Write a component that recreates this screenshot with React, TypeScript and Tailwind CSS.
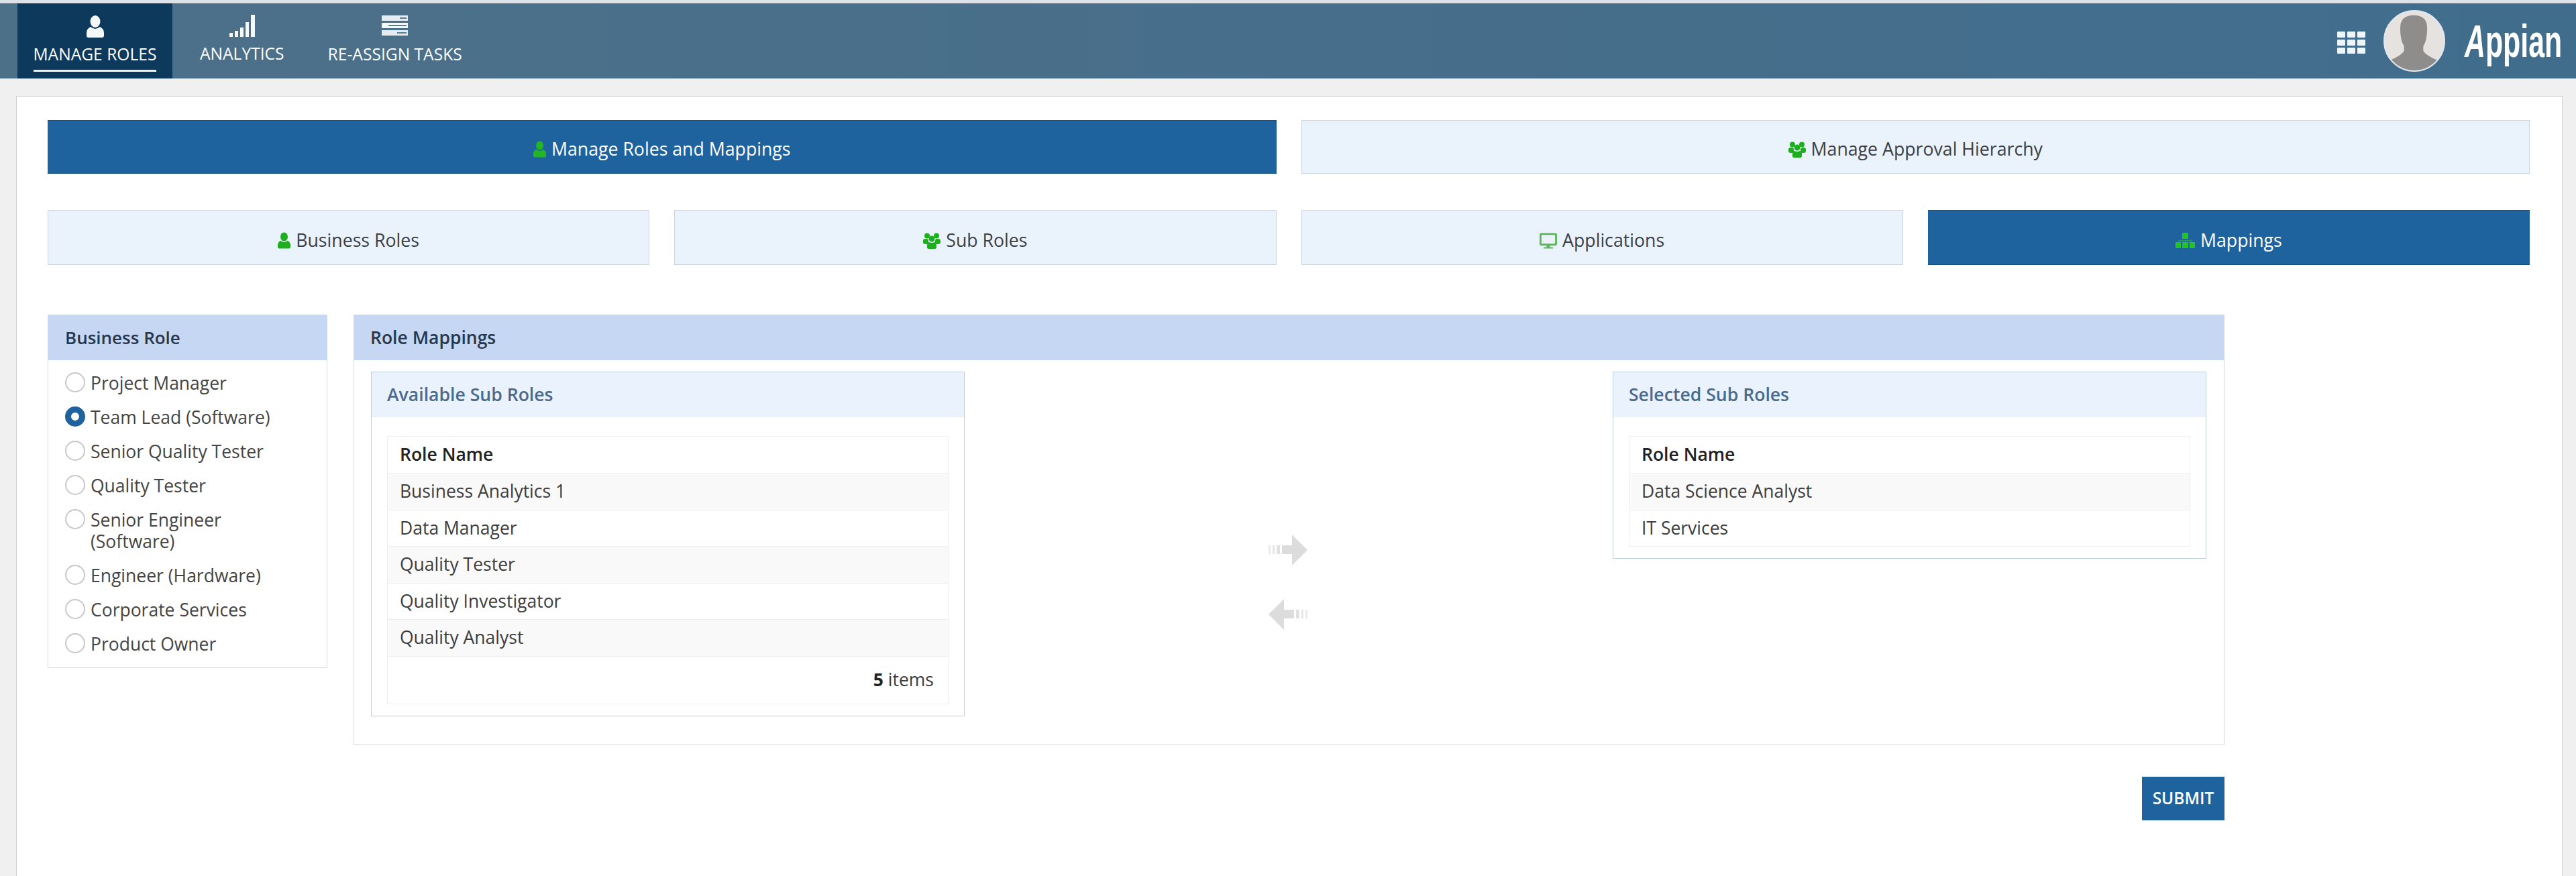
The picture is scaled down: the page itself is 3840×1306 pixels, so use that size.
import { FaDesktop } from "react-icons/fa";

function UserIcon({ className }: { className?: string }) {
  return (
    <svg viewBox="0 0 26 33" className={className} fill="currentColor">
      <ellipse cx="13" cy="9" rx="7.5" ry="9" />
      <path d="M6 17 Q13 23 20 17 Q26 20 26 26 L26 30 Q26 33 23 33 L3 33 Q0 33 0 30 L0 26 Q0 20 6 17Z" />
    </svg>
  );
}

function UsersIcon({ className }: { className?: string }) {
  return (
    <svg viewBox="0 0 26 24" className={className} fill="currentColor">
      <circle cx="6" cy="4.5" r="4" />
      <circle cx="20" cy="4.5" r="4" />
      <rect x="0" y="9" width="8" height="8" rx="3" />
      <rect x="18" y="9" width="8" height="8" rx="3" />
      <circle cx="13" cy="9" r="4.5" />
      <path d="M6 18 Q6 14 9 14 Q13 16 17 14 Q20 14 20 18 L20 22 Q20 24 18 24 L8 24 Q6 24 6 22Z" />
    </svg>
  );
}

function SitemapIcon({ className }: { className?: string }) {
  return (
    <svg viewBox="0 0 29 23" className={className} fill="currentColor">
      <rect x="10" y="0" width="9" height="9" />
      <rect x="4" y="11" width="21" height="2" opacity="0.6" />
      <rect x="0" y="14" width="8" height="9" />
      <rect x="10" y="14" width="9" height="9" />
      <rect x="21" y="14" width="8" height="9" />
    </svg>
  );
}

function SignalIcon() {
  return (
    <svg viewBox="0 0 38 33" className="w-[38px] h-[33px]" fill="#f4f8fa">
      <rect x="0" y="27" width="5" height="6" />
      <rect x="8" y="24" width="5" height="9" />
      <rect x="16" y="19" width="5" height="14" />
      <rect x="24" y="11" width="5" height="22" />
      <rect x="32" y="0" width="6" height="33" />
    </svg>
  );
}

function ServerIcon() {
  return (
    <svg viewBox="0 0 39 30" className="w-[39px] h-[30px]">
      <rect y="0" width="39" height="8" fill="#e6edf2" />
      <rect x="27" y="3" width="10" height="2" fill="#5a7c94" />
      <rect y="11" width="39" height="8" fill="#f4f8fa" />
      <rect x="10" y="14" width="27" height="2" fill="#5a7c94" />
      <rect y="22" width="39" height="8" fill="#e6edf2" />
      <rect x="23" y="25" width="14" height="2" fill="#5a7c94" />
    </svg>
  );
}

function GridIcon() {
  return (
    <div className="grid grid-cols-3 gap-[3px] w-[42px] mt-[4px]">
      {[0, 1, 2, 3, 4, 5, 6, 7, 8].map((i) => (
        <span key={i} className="h-[9px] bg-[#eef6fb] rounded-[1px]" />
      ))}
    </div>
  );
}

function Avatar() {
  return (
    <div className="w-[92px] h-[92px] rounded-full border-2 border-[#dfe7ee] bg-[#e6e2df] overflow-hidden">
      <svg viewBox="0 0 92 92" className="w-full h-full">
        <path
          d="M24 26 Q24 6 45 6 Q66 6 66 26 Q66 46 60 54 L60 62 Q66 70 82 76 L82 92 L8 92 L8 76 Q24 70 30 62 L30 54 Q24 46 24 26Z"
          fill="#8f8d8c"
        />
      </svg>
    </div>
  );
}

function ArrowIcon({ flip }: { flip?: boolean }) {
  return (
    <svg viewBox="0 0 58 46" className={flip ? "w-[58px] h-[46px] -scale-x-100" : "w-[58px] h-[46px]"} fill="#dcdcdc">
      <rect x="0" y="16" width="3" height="13" opacity="0.6" />
      <rect x="6" y="16" width="3" height="13" opacity="0.7" />
      <rect x="12" y="16" width="5" height="13" opacity="0.85" />
      <rect x="20" y="16" width="16" height="13" />
      <path d="M35 0 L58 23 L35 46Z" />
    </svg>
  );
}

function TopButton({ label, active, tall, icon }: { label: string; active?: boolean; tall?: boolean; icon: React.ReactNode }) {
  return (
    <div
      className={
        (tall ? "h-[82px] pt-[9px] " : "h-[80px] pt-[7px] ") +
        (active
          ? "flex items-center justify-center gap-[8px] bg-[#1f639e] text-white text-[26.7px] border-y border-[#16507f]"
          : "flex items-center justify-center gap-[8px] bg-[#eaf2fc] text-[#3a3f45] text-[26.7px] border border-[#ccd4de]")
      }
    >
      {icon}
      <span>{label}</span>
    </div>
  );
}

function RoleTable({ rows, footer }: { rows: string[]; footer?: boolean }) {
  return (
    <div className="border border-[#eeeeee] text-[26.5px] text-[#3d3d3d]">
      <div className="h-[54px] flex items-center pl-[18px] font-semibold text-[#222]">Role Name</div>
      {rows.map((r, i) => (
        <div
          key={r}
          className={
            i % 2 === 0
              ? "h-[54.6px] flex items-center pl-[18px] border-t border-[#eeeeee] bg-[#f9f9f9]"
              : "h-[54.6px] flex items-center pl-[18px] border-t border-[#eeeeee]"
          }
        >
          {r}
        </div>
      ))}
      {footer && (
        <div className="h-[71px] flex items-center justify-end pr-[21px] border-t border-[#eeeeee]">
          <b className="font-bold text-[#222] mr-[7px]">5</b> items
        </div>
      )}
    </div>
  );
}

function SubPanel({ title, children }: { title: string; children: React.ReactNode }) {
  return (
    <div className="w-[885px] border border-[#c0cfdc] pb-[17px]">
      <div className="h-[67px] flex items-center pl-[23px] bg-[#e9f2fd] text-[26.6px] font-semibold text-[#4a6a8e]">{title}</div>
      <div className="mt-[28px] mx-[23px]">{children}</div>
    </div>
  );
}

const roles = [
  "Project Manager",
  "Team Lead (Software)",
  "Senior Quality Tester",
  "Quality Tester",
  "Senior Engineer (Software)",
  "Engineer (Hardware)",
  "Corporate Services",
  "Product Owner",
];

export default function App() {
  return (
    <div className="w-[3840px] h-[1306px] overflow-hidden bg-[#f1f0f1] font-['Open_Sans',sans-serif]">
      <div className="h-[5px] bg-[#dde1e8]" />

      {/* top nav */}
      <header className="h-[112px] flex items-stretch pl-[26px] pr-[21px] bg-linear-to-r from-[#4d7089] to-[#416d8d] text-white text-[24.6px]">
        <div className="w-[231px] bg-[#0d3a5c] flex flex-col items-center pt-[18px]">
          <UserIcon className="w-[26px] h-[33px] text-[#f4f8fa]" />
          <span className="mt-[8px] leading-[34px] border-b-[3px] border-[#e6f3f8] pb-[6px]">MANAGE ROLES</span>
        </div>
        <div className="ml-[41px] flex flex-col items-center pt-[17px]">
          <SignalIcon />
          <span className="mt-[8px] leading-[34px]">ANALYTICS</span>
        </div>
        <div className="ml-[65px] flex flex-col items-center pt-[18px]">
          <ServerIcon />
          <span className="mt-[11px] leading-[34px]">RE-ASSIGN TASKS</span>
        </div>
        <div className="ml-auto flex items-center">
          <GridIcon />
          <div className="ml-[27px]">
            <Avatar />
          </div>
          <div className="ml-[29px] w-[145px] h-[90px] font-['Liberation_Sans',sans-serif] font-bold text-[68px] leading-[90px]">
            <div className="origin-left scale-x-[0.63] whitespace-nowrap">
              <span className="italic">A</span>ppian
            </div>
          </div>
        </div>
      </header>

      {/* content card */}
      <main className="mt-[26px] mx-[24px] w-[3796px] h-[1200px] bg-white border border-[#cfcfcf] pt-[35px] px-[46px]">
        <div className="grid grid-cols-2 gap-[37px] w-[3700px]">
          <TopButton active label="Manage Roles and Mappings" icon={<UserIcon className="w-[19px] h-[25px] text-[#22b722]" />} />
          <TopButton label="Manage Approval Hierarchy" icon={<UsersIcon className="w-[26px] h-[24px] text-[#1fae1f]" />} />
        </div>
        <div className="grid grid-cols-4 gap-[37px] mt-[54px] w-[3700px]">
          <TopButton tall label="Business Roles" icon={<UserIcon className="w-[19px] h-[25px] text-[#1fae1f]" />} />
          <TopButton tall label="Sub Roles" icon={<UsersIcon className="w-[26px] h-[24px] text-[#1fae1f]" />} />
          <TopButton tall label="Applications" icon={<FaDesktop className="w-[26px] h-[24px] text-[#5cb85c]" />} />
          <TopButton tall active label="Mappings" icon={<SitemapIcon className="w-[29px] h-[23px] text-[#22c322]" />} />
        </div>

        <div className="flex items-start gap-[39px] mt-[74px]">
          {/* business role list */}
          <section className="w-[417px] h-[527px] border border-[#d5dbe3]">
            <div className="h-[67px] flex items-center pl-[25px] bg-[#c5d7f3] text-[26px] font-semibold text-[#27384e]">Business Role</div>
            <ul className="pt-[18px] pl-[25px] pr-[40px] text-[26.5px] leading-[32px] text-[#444]">
              {roles.map((r, i) => (
                <li key={r} className="flex items-start gap-[8px] mb-[19px]">
                  {i === 1 ? (
                    <span className="shrink-0 w-[30px] h-[30px] rounded-full border-[9px] border-[#1f639e] bg-white" />
                  ) : (
                    <span className="shrink-0 w-[30px] h-[30px] rounded-full border-2 border-[#c8c8c8] bg-white" />
                  )}
                  <span>{r}</span>
                </li>
              ))}
            </ul>
          </section>

          {/* mappings */}
          <div className="w-[2789px]">
            <section className="h-[642px] border border-[#d5d8dc]">
              <div className="h-[67px] flex items-center pl-[24px] bg-[#c5d7f3] text-[26.5px] font-semibold text-[#27384e]">Role Mappings</div>
              <div className="flex items-start justify-between mt-[17px] pl-[25px] pr-[26px]">
                <SubPanel title="Available Sub Roles">
                  <RoleTable rows={["Business Analytics 1", "Data Manager", "Quality Tester", "Quality Investigator", "Quality Analyst"]} footer />
                </SubPanel>
                <div className="flex flex-col gap-[50px] mt-[243px] mr-[2px]">
                  <ArrowIcon />
                  <ArrowIcon flip />
                </div>
                <SubPanel title="Selected Sub Roles">
                  <RoleTable rows={["Data Science Analyst", "IT Services"]} />
                </SubPanel>
              </div>
            </section>
            <div className="flex justify-end mt-[47px]">
              <button className="w-[123px] h-[65px] bg-[#1f639e] text-white text-[24.5px] font-semibold">SUBMIT</button>
            </div>
          </div>
        </div>
      </main>
    </div>
  );
}
